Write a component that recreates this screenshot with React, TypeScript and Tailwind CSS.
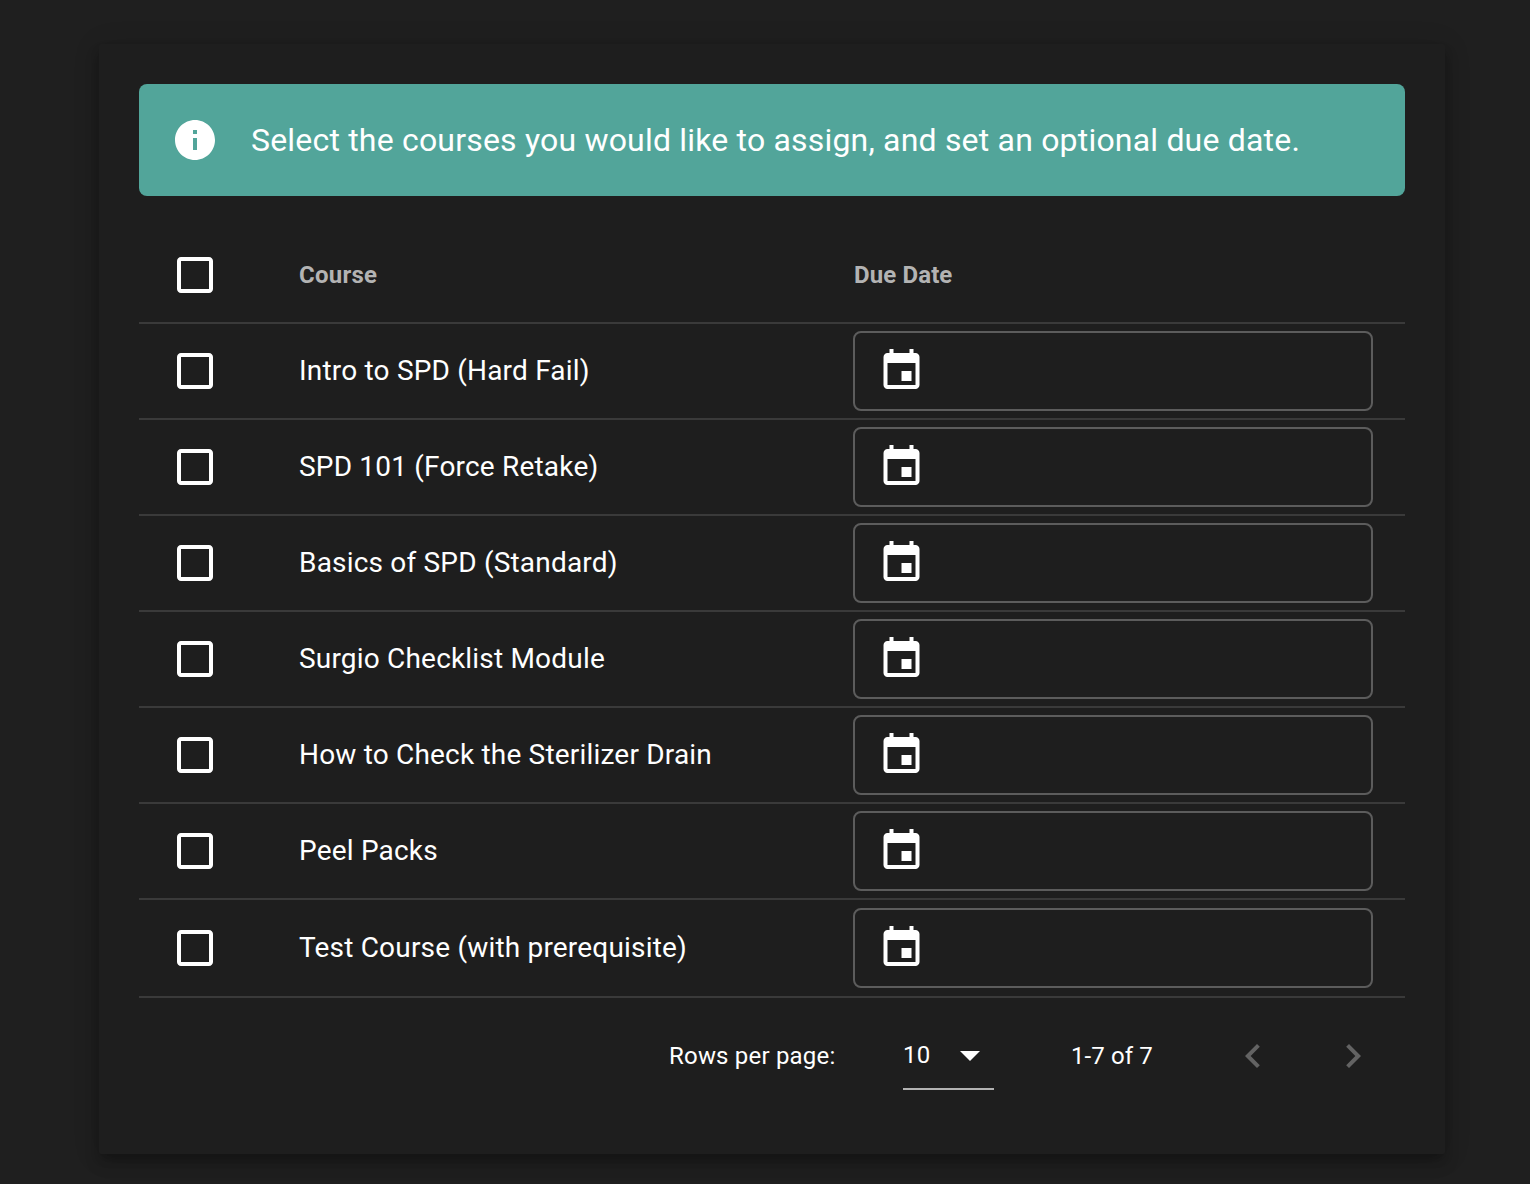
const courses = [
  "Intro to SPD (Hard Fail)",
  "SPD 101 (Force Retake)",
  "Basics of SPD (Standard)",
  "Surgio Checklist Module",
  "How to Check the Sterilizer Drain",
  "Peel Packs",
  "Test Course (with prerequisite)",
];

function Icon({ d, className, viewBox = "0 0 24 24" }: { d: string; className?: string; viewBox?: string }) {
  return (
    <svg viewBox={viewBox} fill="currentColor" className={className}>
      <path d={d} />
    </svg>
  );
}

const BOX = "M19 5v14H5V5h14m0-2H5c-1.1 0-2 .9-2 2v14c0 1.1.9 2 2 2h14c1.1 0 2-.9 2-2V5c0-1.1-.9-2-2-2z";
const EVENT = "M17 12h-5v5h5v-5zM16 1v2H8V1H6v2H5c-1.11 0-1.99.9-1.99 2L3 19c0 1.1.89 2 2 2h14c1.1 0 2-.9 2-2V5c0-1.1-.9-2-2-2h-1V1h-2zm3 18H5V8h14v11z";
const INFO = "M12 2C6.48 2 2 6.48 2 12s4.48 10 10 10 10-4.48 10-10S17.52 2 12 2zm1 15h-2v-6h2v6zm0-8h-2V7h2v2z";

function Row({ name, last }: { name: string; last: boolean }) {
  return (
    <div className={`flex items-center border-b-2 border-[#3a3a3a] ${last ? "h-[98px]" : "h-[96px]"}`}>
      <div className="w-[160px] pl-[32px] shrink-0">
        <Icon d={BOX} className="w-[48px] h-[48px] text-white" />
      </div>
      <div className="w-[554px] shrink-0 text-[28px] leading-[40px] tracking-[0.19px] text-white">{name}</div>
      <div className="w-[520px] h-[80px] shrink-0 border-2 border-[#5c5c5c] rounded-[8px] flex items-center pl-[22px]">
        <Icon d={EVENT} viewBox="-0.25 0 24 24" className="w-[48px] h-[48px] text-white" />
      </div>
    </div>
  );
}

export default function App() {
  return (
    <div className="min-h-[1184px] bg-[#1f1f1f] pt-[44px] px-[99px] font-['Roboto',sans-serif]">
      <div className="w-[1346px] h-[1110px] bg-[#1e1e1e] p-[40px] rounded-[2px] shadow-[0_6px_10px_-2px_rgba(0,0,0,0.2),0_10px_16px_rgba(0,0,0,0.14),0_2px_28px_rgba(0,0,0,0.12)]">
        <div className="h-[112px] bg-[#52a59a] rounded-[8px] flex items-center pl-[32px] text-white">
          <Icon d={INFO} className="w-[48px] h-[48px] shrink-0" />
          <span className="ml-[32px] text-[32px] leading-[48px] tracking-[0.19px]">
            Select the courses you would like to assign, and set an optional due date.
          </span>
        </div>
        <div className="mt-[32px]">
          <div className="flex items-center h-[96px] border-b-2 border-[#3a3a3a]">
            <div className="w-[160px] pl-[32px] shrink-0">
              <Icon d={BOX} className="w-[48px] h-[48px] text-white" />
            </div>
            <div className="w-[555px] shrink-0 text-[24px] font-bold tracking-[0.24px] text-[#b3b3b3]">Course</div>
            <div className="text-[24px] font-bold tracking-[0.12px] text-[#b3b3b3]">Due Date</div>
          </div>
          {courses.map((c, i) => (
            <Row key={c} name={c} last={i === courses.length - 1} />
          ))}
        </div>
        <div className="flex items-center h-[100px] mt-[8px] pl-[530px] text-white text-[24px] tracking-[0.2px]">
          <span className="w-[234px] shrink-0">Rows per page:</span>
          <div className="w-[91px] h-[68px] shrink-0 border-b-2 border-[#b3b3b3] flex items-center justify-between pr-[12px]">
            <span>10</span>
            <svg viewBox="0 0 24 24" fill="currentColor" className="w-[48px] h-[48px] -mr-[12px]">
              <path d="M7 10l5 5 5-5z" />
            </svg>
          </div>
          <span className="ml-[77px] w-[156px] shrink-0 tracking-[0.1px]">1-7 of 7</span>
          <Icon d="M15.41 7.41L14 6l-6 6 6 6 1.41-1.41L10.83 12z" className="w-[48px] h-[48px] text-[#636363] shrink-0 ml-[2px]" />
          <Icon d="M10 6L8.59 7.41 13.17 12l-4.58 4.59L10 18l6-6z" className="w-[48px] h-[48px] text-[#636363] shrink-0 ml-[52px]" />
        </div>
      </div>
    </div>
  );
}
